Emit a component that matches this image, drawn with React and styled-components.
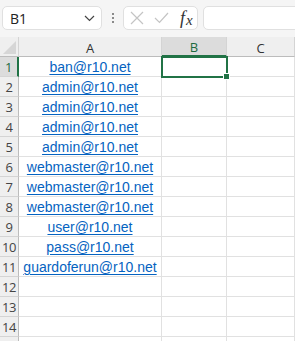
import React from "react";
import styled, { createGlobalStyle } from "styled-components";

const emails = [
  "ban@r10.net",
  "admin@r10.net",
  "admin@r10.net",
  "admin@r10.net",
  "admin@r10.net",
  "webmaster@r10.net",
  "webmaster@r10.net",
  "webmaster@r10.net",
  "user@r10.net",
  "pass@r10.net",
  "guardoferun@r10.net",
];

const ROWS = 15;
const VISIBLE_NUMBERS = 14;
const columns = ["A", "B", "C"];

const GlobalStyle = createGlobalStyle`
  html, body {
    margin: 0;
    padding: 0;
    background: #ffffff;
    overflow: hidden;
  }
  body {
    font-family: "Liberation Sans", Arial, sans-serif;
  }
`;

const App = () => {
  const rows = [];
  for (let i = 1; i <= ROWS; i++) rows.push(i);

  return (
    <Wrapper>
      <GlobalStyle />
      <Toolbar>
        <NameBox>
          <span>B1</span>
          <svg width="11" height="7" viewBox="0 0 11 7">
            <path d="M1 1l4.5 4.5L10 1" fill="none" stroke="#444" strokeWidth="1.2" />
          </svg>
        </NameBox>
        <Dots>
          <i />
          <i />
          <i />
        </Dots>
        <FormulaButtons>
          <svg width="14" height="14" viewBox="0 0 14 14">
            <path d="M1 1l12 12M13 1L1 13" stroke="#c4c4c4" strokeWidth="1.2" fill="none" />
          </svg>
          <svg width="15" height="12" viewBox="0 0 15 12">
            <path d="M1 6l4.5 4.5L14 1" stroke="#c4c4c4" strokeWidth="1.2" fill="none" />
          </svg>
          <Fx>
            f<sub>x</sub>
          </Fx>
        </FormulaButtons>
        <FormulaInput />
      </Toolbar>

      <Sheet>
        <Grid>
          <Corner>
            <CornerTriangle />
          </Corner>
          {columns.map((c) => (
            <ColHeader key={c} active={c === "B"}>
              {c}
            </ColHeader>
          ))}
          {rows.map((r) => (
            <React.Fragment key={r}>
              <RowHeader active={r === 1}>{r <= VISIBLE_NUMBERS ? r : ""}</RowHeader>
              <Cell>{emails[r - 1] && <Link>{emails[r - 1]}</Link>}</Cell>
              <Cell />
              <Cell />
            </React.Fragment>
          ))}
        </Grid>
        <Selection>
          <FillHandle />
        </Selection>
      </Sheet>
    </Wrapper>
  );
};

const Wrapper = styled.div`
  width: 295px;
  height: 341px;
  overflow: hidden;
  background: #ffffff;
`;

const Toolbar = styled.div`
  height: 37px;
  box-sizing: border-box;
  display: flex;
  align-items: center;
  padding: 5px 0 6px 2px;
  background: #f5f5f5;
`;

const NameBox = styled.div`
  width: 100px;
  height: 24px;
  box-sizing: border-box;
  display: flex;
  align-items: center;
  justify-content: space-between;
  padding: 0 6px 0 7px;
  background: #ffffff;
  border: 1px solid #e0e0e0;
  border-radius: 5px;
  font-family: "Open Sans", "Noto Sans", sans-serif;
  font-size: 14px;
  color: #222;
`;

const Dots = styled.div`
  width: 21px;
  display: flex;
  flex-direction: column;
  align-items: center;
  gap: 2px;

  i {
    width: 2px;
    height: 2px;
    background: #8a8a8a;
  }
`;

const FormulaButtons = styled.div`
  width: 75px;
  height: 24px;
  box-sizing: border-box;
  display: flex;
  align-items: center;
  gap: 10px;
  padding: 0 0 0 6px;
  background: #ffffff;
  border: 1px solid #e0e0e0;
  border-radius: 5px;
`;

const Fx = styled.span`
  font-family: "Liberation Serif", "Times New Roman", serif;
  font-style: italic;
  font-size: 18px;
  color: #333;
  line-height: 1;
  margin-left: 1px;

  sub {
    font-size: 15px;
    vertical-align: -1px;
    margin-left: 1px;
  }
`;

const FormulaInput = styled.div`
  flex: 1;
  height: 24px;
  margin-left: 5px;
  margin-right: -10px;
  box-sizing: border-box;
  background: #ffffff;
  border: 1px solid #e0e0e0;
  border-radius: 5px;
`;

const Sheet = styled.div`
  position: relative;
`;

const Grid = styled.div`
  display: grid;
  grid-template-columns: 19px 143px 65px 1fr;
  grid-auto-rows: 20px;
`;

const Corner = styled.div`
  position: relative;
  background: #efefef;
  border-right: 1px solid #d4d4d4;
  border-bottom: 1px solid #bcbcbc;
  box-sizing: border-box;
`;

const CornerTriangle = styled.div`
  position: absolute;
  right: 2px;
  bottom: 2px;
  width: 0;
  height: 0;
  border-left: 13px solid transparent;
  border-bottom: 13px solid #d6d6d6;
`;

const ColHeader = styled.div`
  box-sizing: border-box;
  display: flex;
  align-items: center;
  justify-content: center;
  padding-top: 2px;
  background: ${(p) => (p.active ? "#dcdcdc" : "#efefef")};
  border-right: 1px solid #d4d4d4;
  border-bottom: ${(p) => (p.active ? "2px solid #217346" : "1px solid #bcbcbc")};
  font-family: "Open Sans", "Noto Sans", sans-serif;
  font-size: 13px;
  color: ${(p) => (p.active ? "#1e6b41" : "#333")};
`;

const RowHeader = styled.div`
  box-sizing: border-box;
  display: flex;
  align-items: center;
  justify-content: center;
  padding-top: 1px;
  background: ${(p) => (p.active ? "#dcdcdc" : "#efefef")};
  border-right: ${(p) => (p.active ? "2px solid #217346" : "1px solid #bcbcbc")};
  border-bottom: 1px solid #d4d4d4;
  font-family: "Open Sans", "Noto Sans", sans-serif;
  font-size: 13px;
  letter-spacing: -0.5px;
  color: ${(p) => (p.active ? "#1e6b41" : "#444")};
`;

const Cell = styled.div`
  box-sizing: border-box;
  display: flex;
  align-items: center;
  justify-content: center;
  padding-top: 1px;
  border-right: 1px solid #e1e1e1;
  border-bottom: 1px solid #e1e1e1;
  overflow: visible;
  white-space: nowrap;
`;

const Link = styled.span`
  font-family: "Liberation Sans", Arial, sans-serif;
  font-size: 14px;
  color: #0563c1;
  text-decoration: underline;
  text-underline-offset: 2px;
`;

const Selection = styled.div`
  position: absolute;
  left: 161px;
  top: 19px;
  width: 67px;
  height: 22px;
  box-sizing: border-box;
  border: 2px solid #217346;
`;

const FillHandle = styled.div`
  position: absolute;
  right: -4px;
  bottom: -4px;
  width: 5px;
  height: 5px;
  background: #217346;
  border: 1px solid #ffffff;
`;

export default App;
